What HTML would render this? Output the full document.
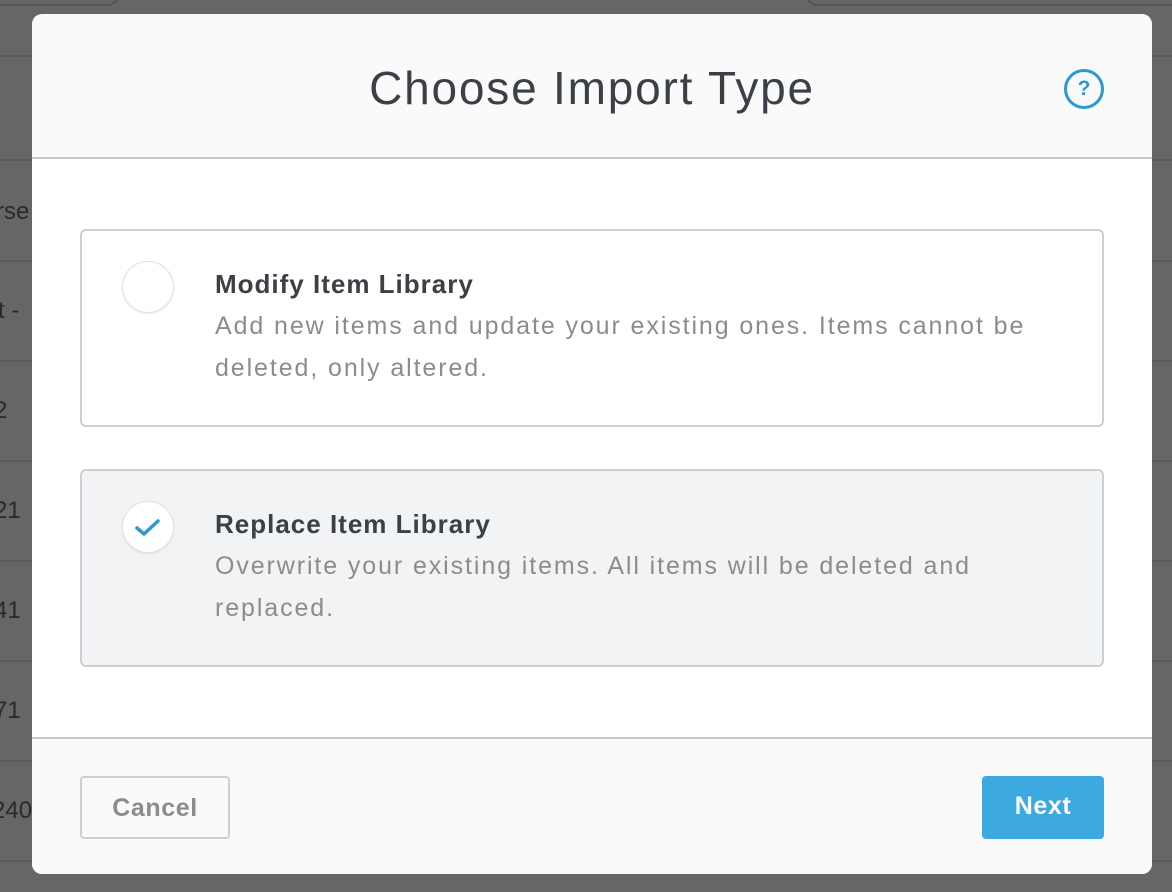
<!DOCTYPE html>
<html><head><style>
*{margin:0;padding:0;box-sizing:border-box}
body{width:1172px;height:892px;background:#666;position:relative;overflow:hidden;font-family:"Liberation Sans",sans-serif}
.bg{position:absolute;color:#2a2a2a;font-size:24px}
.ln{position:absolute;left:0;width:1172px;height:2px;background:#5a5a5a}
.modal{position:absolute;left:32px;top:14px;width:1120px;height:860px;background:#fafafa;border-radius:10px;overflow:hidden}
.head{height:145px;border-bottom:2px solid #c6c9cc;text-align:center}
.head h1{font-weight:normal;font-size:46px;color:#3b4046;line-height:148px;letter-spacing:1.8px}
.help{position:absolute;left:1032px;top:55px;width:40px;height:40px;border:3.5px solid #2b9ad3;border-radius:50%;color:#2b9ad3;font-weight:bold;font-size:21px;text-align:center;line-height:33px}
.body{position:absolute;top:145px;left:0;width:1120px;height:578px;background:#fff}
.card{position:absolute;left:48px;width:1024px;height:198px;border:2px solid #cdd0d3;border-radius:6px;background:#fff}
.card.sel{background:#f2f3f5}
.circ{position:absolute;left:40px;top:30px;width:52px;height:52px;border-radius:50%;background:#fff;border:1.5px solid #e2e2e2;box-shadow:0 1px 2px rgba(0,0,0,.08)}
.card h2{position:absolute;left:133px;top:38px;font-size:26px;color:#3b4046;font-weight:bold;letter-spacing:1px}
.card p{position:absolute;left:133px;top:74px;width:880px;font-size:25px;color:#8c8c8c;line-height:42px;letter-spacing:1.9px}
.foot{position:absolute;top:723px;left:0;width:1120px;height:137px;border-top:2px solid #c6c9cc;background:#fafafa}
.btn{position:absolute;top:37px;height:63px;border-radius:4px;font-size:25px;font-weight:bold;text-align:center;line-height:60px;letter-spacing:0.6px}
.cancel{left:48px;width:150px;border:2px solid #cdd0d3;color:#8c8c8c;background:#fafafa}
.next{left:950px;width:122px;background:#3ca9e0;color:#fff}
</style></head><body>
<div style="position:absolute;left:-10px;top:-20px;width:130px;height:26px;border:2px solid #555;border-radius:14px"></div>
<div style="position:absolute;left:805px;top:-20px;width:400px;height:26px;border:2px solid #555;border-radius:14px"></div>
<div class="ln" style="top:55px"></div><div class="ln" style="top:159px"></div><div class="ln" style="top:260px"></div><div class="ln" style="top:360px"></div><div class="ln" style="top:460px"></div><div class="ln" style="top:560px"></div><div class="ln" style="top:660px"></div><div class="ln" style="top:760px"></div><div class="ln" style="top:860px"></div>
<div class="bg" style="left:-4px;top:198px">rse</div>
<div class="bg" style="left:-2px;top:297px">t -</div>
<div class="bg" style="left:-6px;top:397px">2</div>
<div class="bg" style="left:-6px;top:497px">21</div>
<div class="bg" style="left:-6px;top:597px">41</div>
<div class="bg" style="left:-6px;top:697px">71</div>
<div class="bg" style="left:-8px;top:797px">240</div>
<div class="modal">
<div class="head"><h1>Choose Import Type</h1><div class="help">?</div></div>
<div class="body">
<div class="card" style="top:70px"><div class="circ"></div><h2>Modify Item Library</h2><p>Add new items and update your existing ones. Items cannot be<br>deleted, only altered.</p></div>
<div class="card sel" style="top:310px"><div class="circ"><svg width="52" height="52" style="position:absolute;left:-1.5px;top:-1.5px"><path d="M15 27 L22 33 L36 20" fill="none" stroke="#2b9ad3" stroke-width="3.5" stroke-linecap="round" stroke-linejoin="round"/></svg></div><h2>Replace Item Library</h2><p>Overwrite your existing items. All items will be deleted and<br>replaced.</p></div>
</div>
<div class="foot"><div class="btn cancel">Cancel</div><div class="btn next">Next</div></div>
</div>
</body></html>
